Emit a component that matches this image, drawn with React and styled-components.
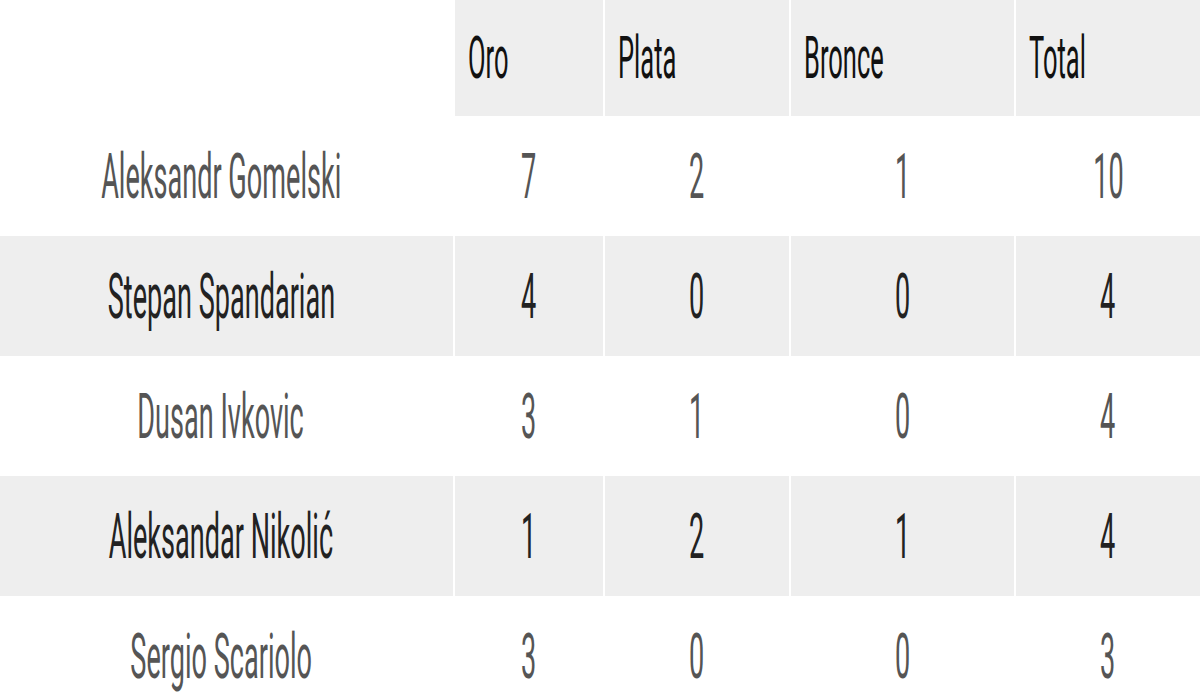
import React from "react";
import styled, { createGlobalStyle } from "styled-components";

const GlobalStyle = createGlobalStyle`
  html, body {
    margin: 0;
    padding: 0;
    background: #fff;
    overflow: hidden;
  }
  body {
    font-family: Roboto, "Liberation Sans", sans-serif;
  }
`;

const Table = styled.table`
  border-collapse: separate;
  border-spacing: 2px 0;
  table-layout: fixed;
  width: 1204px;
  margin-left: -2px;
`;

const HeadCell = styled.th`
  height: 116px;
  padding: 0 0 0 13px;
  text-align: left;
  vertical-align: middle;
  background: ${(p) => (p.$blank ? "#fff" : "#eeeeee")};
  color: #111;
  font-weight: 400;
  overflow: hidden;
`;

const Row = styled.tr`
  background: ${(p) => (p.$shaded ? "#eeeeee" : "#fff")};
  color: ${(p) => (p.$shaded ? "#222" : "#555")};
`;

const Cell = styled.td`
  height: 120px;
  padding: ${(p) => (p.$name ? "0 11px 0 0" : "0")};
  vertical-align: middle;
  overflow: hidden;
`;

const Center = styled.div`
  display: flex;
  justify-content: center;
  align-items: center;
`;

const Squeezed = styled.span`
  display: inline-block;
  flex: none;
  line-height: 1;
  font-size: ${(p) => (p.$head ? "60px" : "63px")};
  transform: scaleX(${(p) => (p.$head ? 0.425 : 0.43)});
  transform-origin: ${(p) => (p.$head ? "left center" : "center center")};
  white-space: nowrap;
`;

const columns = [
  { label: "", width: 453 },
  { label: "Oro", width: 148 },
  { label: "Plata", width: 184 },
  { label: "Bronce", width: 223 },
  { label: "Total", width: 184 },
];

const rows = [
  ["Aleksandr Gomelski", 7, 2, 1, 10],
  ["Stepan Spandarian", 4, 0, 0, 4],
  ["Dusan Ivkovic", 3, 1, 0, 4],
  ["Aleksandar Nikolić", 1, 2, 1, 4],
  ["Sergio Scariolo", 3, 0, 0, 3],
];

export default function App() {
  return (
    <>
      <GlobalStyle />
      <Table>
        <colgroup>
          {columns.map((c, i) => (
            <col key={i} style={{ width: c.width }} />
          ))}
        </colgroup>
        <thead>
          <tr>
            {columns.map((c, i) => (
              <HeadCell key={i} $blank={!c.label}>
                {c.label && <Squeezed $head>{c.label}</Squeezed>}
              </HeadCell>
            ))}
          </tr>
        </thead>
        <tbody>
          {rows.map((r, i) => (
            <Row key={r[0]} $shaded={i % 2 === 1}>
              {r.map((v, j) => (
                <Cell key={j} $name={j === 0}>
                  <Center>
                    <Squeezed>{v}</Squeezed>
                  </Center>
                </Cell>
              ))}
            </Row>
          ))}
        </tbody>
      </Table>
    </>
  );
}
